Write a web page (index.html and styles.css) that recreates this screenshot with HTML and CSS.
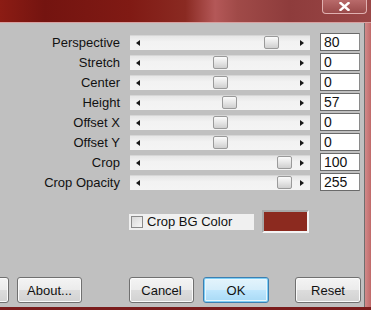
FILE: index.html
```
<!DOCTYPE html>
<html lang="en">
<head>
    <meta charset="UTF-8">
    <title>Perspective Settings</title>
    <link rel="stylesheet" href="styles.css">
</head>
<body>
    <div class="window">
        <div class="titlebar">
            <div class="close-button">
                <svg width="11" height="9" viewBox="0 0 11 9"><path d="M1.5 1 L9.5 8 M9.5 1 L1.5 8" stroke="white" stroke-width="2.4" stroke-linecap="square"/></svg>
            </div>
        </div>

        <div class="main">
            <div class="panel">
                <div class="rows">
                    <div class="row">
                        <span class="label">Perspective</span>
                        <div class="track"><span class="arrow-left"></span><span class="arrow-right"></span><span class="thumb" style="left: 134px"></span></div>
                        <div class="value">80</div>
                    </div>
                    <div class="row">
                        <span class="label">Stretch</span>
                        <div class="track"><span class="arrow-left"></span><span class="arrow-right"></span><span class="thumb" style="left: 83px"></span></div>
                        <div class="value">0</div>
                    </div>
                    <div class="row">
                        <span class="label">Center</span>
                        <div class="track"><span class="arrow-left"></span><span class="arrow-right"></span><span class="thumb" style="left: 83px"></span></div>
                        <div class="value">0</div>
                    </div>
                    <div class="row">
                        <span class="label">Height</span>
                        <div class="track"><span class="arrow-left"></span><span class="arrow-right"></span><span class="thumb" style="left: 92px"></span></div>
                        <div class="value">57</div>
                    </div>
                    <div class="row">
                        <span class="label">Offset X</span>
                        <div class="track"><span class="arrow-left"></span><span class="arrow-right"></span><span class="thumb" style="left: 83px"></span></div>
                        <div class="value">0</div>
                    </div>
                    <div class="row">
                        <span class="label">Offset Y</span>
                        <div class="track"><span class="arrow-left"></span><span class="arrow-right"></span><span class="thumb" style="left: 83px"></span></div>
                        <div class="value">0</div>
                    </div>
                    <div class="row">
                        <span class="label">Crop</span>
                        <div class="track"><span class="arrow-left"></span><span class="arrow-right"></span><span class="thumb" style="left: 147px"></span></div>
                        <div class="value">100</div>
                    </div>
                    <div class="row">
                        <span class="label">Crop Opacity</span>
                        <div class="track"><span class="arrow-left"></span><span class="arrow-right"></span><span class="thumb" style="left: 147px"></span></div>
                        <div class="value">255</div>
                    </div>
                </div>

                <div class="bg-row">
                    <label class="check-group">
                        <span class="checkbox"></span>
                        <span>Crop BG Color</span>
                    </label>
                    <div class="swatch"></div>
                </div>

                <div class="buttons">
                    <div class="btn btn-hidden"></div>
                    <div class="btn btn-about">About...</div>
                    <div class="btn btn-cancel">Cancel</div>
                    <div class="btn btn-ok">OK</div>
                    <div class="btn btn-reset">Reset</div>
                </div>
            </div>
            <div class="frame-right"></div>
        </div>
        <div class="frame-bottom"></div>
    </div>
</body>
</html>
```

FILE: styles.css
```
body {
    margin: 0;
    width: 371px;
    height: 310px;
    overflow: hidden;
    font-family: "Liberation Sans", Arial, sans-serif;
    font-size: 13px;
    color: #111;
    background-color: #c47676;
}

.window {
    display: flex;
    flex-direction: column;
    height: 310px;
}

.titlebar {
    height: 22px;
    display: flex;
    justify-content: flex-end;
    align-items: flex-start;
    padding-right: 4px;
    background: linear-gradient(90deg, #8c1c14 0%, #741410 12%, #801a14 35%, #8a2a22 50%, #b45858 58%, #a04a48 64%, #8e3c3c 78%, #9a4646 100%);
    border-bottom: 1px solid #d8a0a0;
}

.close-button {
    width: 45px;
    height: 14px;
    box-sizing: border-box;
    border: 1px solid #e0b0b0;
    border-top: none;
    border-radius: 0 0 4px 4px;
    background: linear-gradient(#b86a6a, #9a4a4a);
    display: flex;
    align-items: center;
    justify-content: center;
}

.main {
    display: flex;
    flex: 1;
}

.panel {
    width: 364px;
    background-color: #c0c0c0;
    border-right: 1px solid #6e6e6e;
    display: flex;
    flex-direction: column;
}

.frame-right {
    flex: 1;
    background: linear-gradient(90deg, #d28888, #c06a6a);
}

.frame-bottom {
    height: 3px;
    background-color: #7a1c1c;
}

.rows {
    display: flex;
    flex-direction: column;
    gap: 2px;
    padding-top: 10px;
}

.row {
    display: flex;
    align-items: center;
    height: 18px;
}

.label {
    width: 120px;
    text-align: right;
    margin-right: 10px;
    white-space: nowrap;
}

.track {
    position: relative;
    width: 180px;
    height: 15px;
    box-sizing: border-box;
    border-top: 1px solid #d6d6d6;
    background: linear-gradient(#e6e6e6, #f2f2f2 40%, #f4f4f4);
    display: flex;
    align-items: center;
    justify-content: space-between;
    padding: 0 6px;
}

.arrow-left {
    width: 0;
    height: 0;
    border-top: 3px solid transparent;
    border-bottom: 3px solid transparent;
    border-right: 4px solid #1a1a1a;
}

.arrow-right {
    width: 0;
    height: 0;
    border-top: 3px solid transparent;
    border-bottom: 3px solid transparent;
    border-left: 4px solid #1a1a1a;
}

.thumb {
    position: absolute;
    top: 0;
    width: 15px;
    height: 13px;
    box-sizing: border-box;
    border: 1px solid #9a9a9a;
    border-radius: 2px;
    background: linear-gradient(#fbfbfb, #e6e6e6 50%, #cfcfcf);
}

.value {
    margin-left: 10px;
    width: 40px;
    height: 18px;
    box-sizing: border-box;
    border: 1px solid #6a6a6a;
    border-right-color: #8a8a8a;
    background-color: white;
    padding-left: 3px;
    font-size: 14px;
    line-height: 16px;
}

.bg-row {
    display: flex;
    align-items: center;
    margin-top: 19px;
    padding-left: 129px;
}

.check-group {
    display: flex;
    align-items: center;
    gap: 4px;
    width: 125px;
    height: 16px;
    background-color: #f0f0f0;
    padding-left: 2px;
    box-sizing: border-box;
}

.checkbox {
    width: 12px;
    height: 12px;
    box-sizing: border-box;
    border: 1px solid #8a8a8a;
    background: linear-gradient(135deg, #d8d8d8, #f6f6f6);
}

.swatch {
    margin-left: 8px;
    width: 47px;
    height: 23px;
    box-sizing: border-box;
    border: 2px solid #a8a8a8;
    border-right-color: #f4f4f4;
    border-bottom-color: #f4f4f4;
    background-color: #8c2a1f;
}

.buttons {
    display: flex;
    margin-top: 44px;
}

.btn {
    width: 65px;
    height: 26px;
    box-sizing: border-box;
    border: 1px solid #707070;
    border-radius: 3px;
    background: linear-gradient(#f4f4f4, #ebebeb 50%, #dcdcdc 52%, #d2d2d2);
    display: flex;
    align-items: center;
    justify-content: center;
    box-shadow: inset 0 0 0 1px #fafafa;
}

.btn-hidden {
    margin-left: -56px;
}

.btn-about {
    margin-left: 8px;
}

.btn-cancel {
    margin-left: 47px;
}

.btn-ok {
    margin-left: 9px;
    width: 66px;
    border-color: #3c7fb1;
    background: linear-gradient(#e4f4fc, #d4edfa 50%, #bee6fd 52%, #a7d9f5);
    box-shadow: inset 0 0 0 1px #7ecff6, inset 0 0 0 2px #e8f6fd;
}

.btn-reset {
    margin-left: 26px;
    width: 66px;
}
```
